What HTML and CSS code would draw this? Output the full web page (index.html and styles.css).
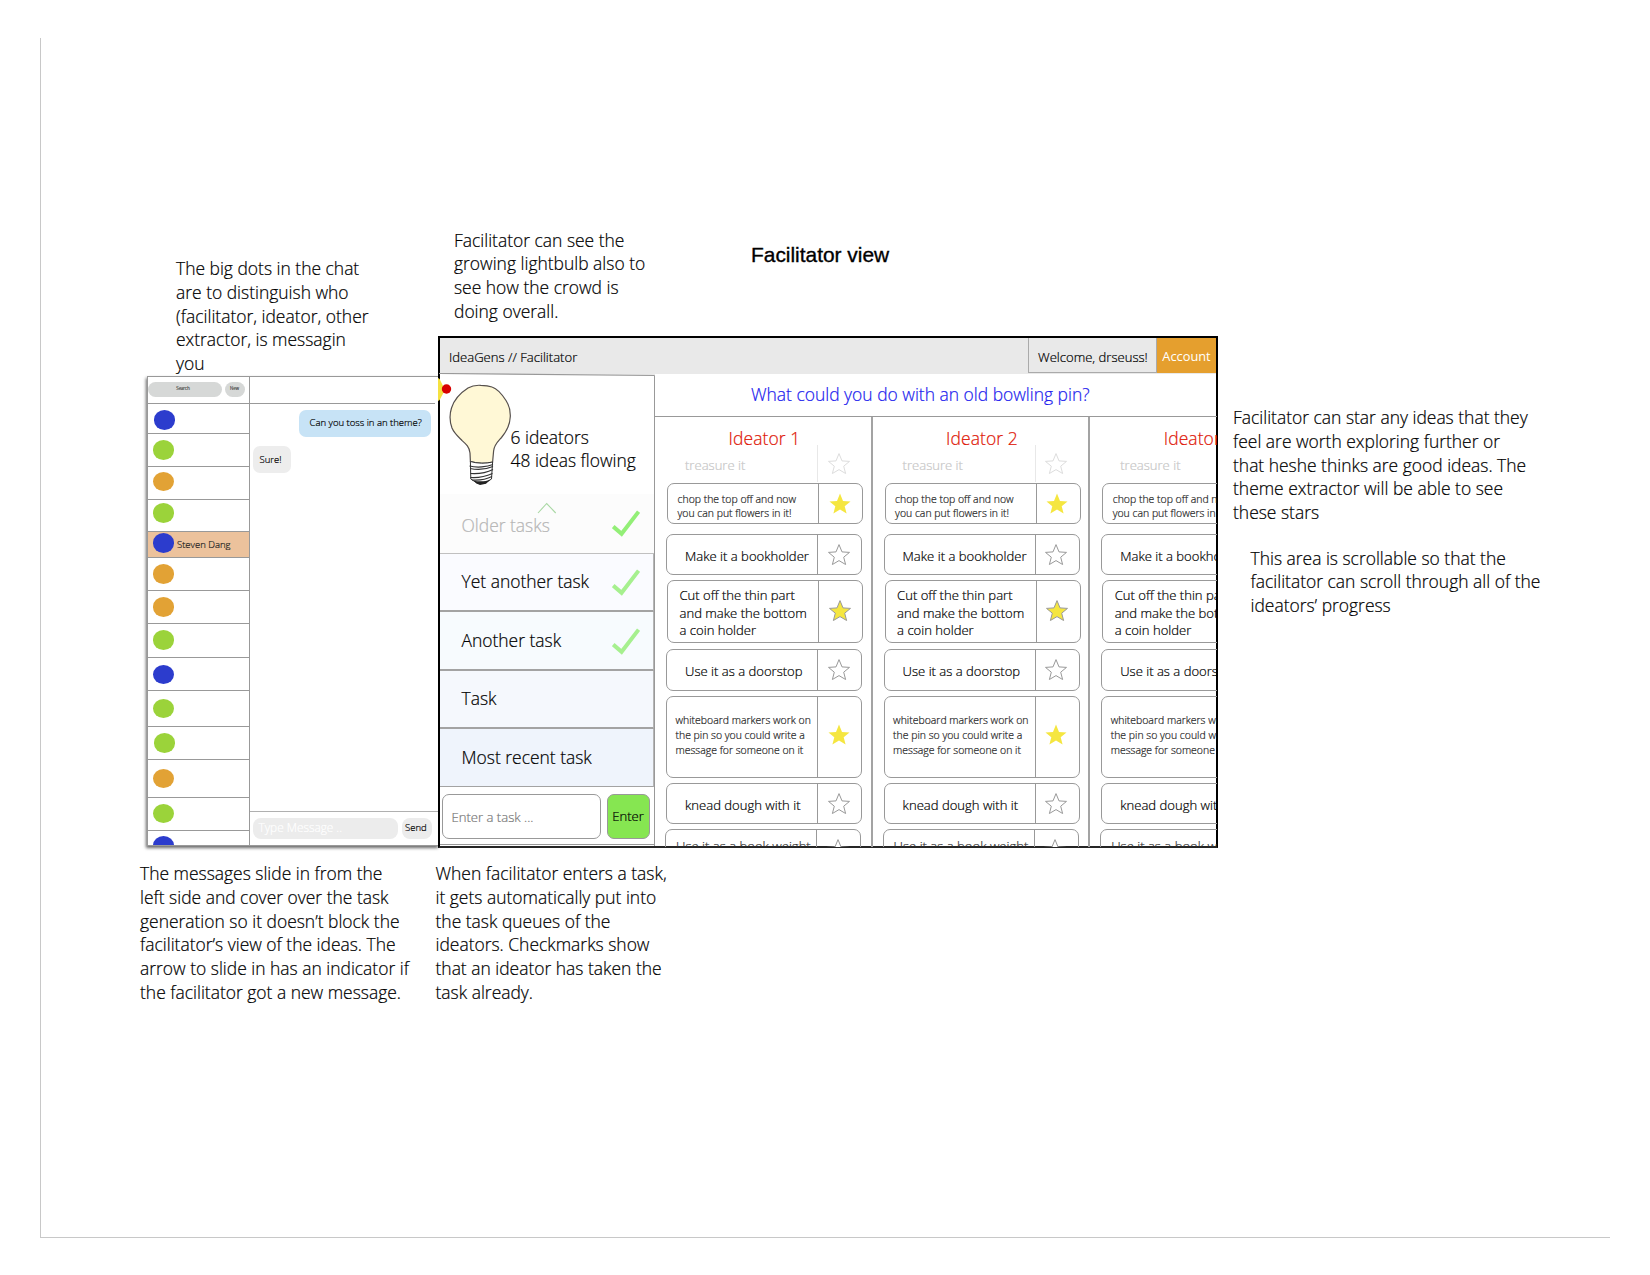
FILE: index.html
```html
<!DOCTYPE html>
<html lang="en">
<head>
<meta charset="utf-8">
<title>IdeaGens – Facilitator view</title>
<link rel="stylesheet" href="styles.css">
</head>
<body>
<svg class="defs" aria-hidden="true">
  <symbol id="star" viewBox="-12 -12 24 24">
    <path d="M0-10.4 3-3.1 10.5-2.6 4.7 2.2 6.6 9.5 0 5.6-6.6 9.5-4.7 2.2-10.5-2.6-3-3.1Z"/>
  </symbol>
  <symbol id="check" viewBox="0 0 28 27">
    <path d="M1.2 16.6 9.6 23.8 26.6 1.6" fill="none" stroke="currentColor" stroke-width="4"/>
  </symbol>
</svg>

<main class="canvas">
  <div class="frame"></div>

  <h1 class="title">Facilitator view</h1>
  <p class="note note-dots">The big dots in the chat<br>are to distinguish who<br>(facilitator, ideator, other<br>extractor, is messagin<br>you</p>
  <p class="note note-bulb">Facilitator can see the<br>growing lightbulb also to<br>see how the crowd is<br>doing overall.</p>
  <p class="note note-messages">The messages slide in from the<br>left side and cover over the task<br>generation so it doesn’t block the<br>facilitator’s view of the ideas. The<br>arrow to slide in has an indicator if<br>the facilitator got a new message.</p>
  <p class="note note-tasks">When facilitator enters a task,<br>it gets automatically put into<br>the task queues of the<br>ideators. Checkmarks show<br>that an ideator has taken the<br>task already.</p>
  <p class="note note-stars">Facilitator can star any ideas that they<br>feel are worth exploring further or<br>that heshe thinks are good ideas. The<br>theme extractor will be able to see<br>these stars</p>
  <p class="note note-scroll">This area is scrollable so that the<br>facilitator can scroll through all of the<br>ideators’ progress</p>

  <section class="chat">
    <aside class="contacts">
      <div class="search-row"><span class="pill search">Search</span><span class="pill new">New</span></div>
      <ul class="contact-list">
        <li><i class="dot blue"></i></li>
        <li><i class="dot green"></i></li>
        <li><i class="dot orange"></i></li>
        <li><i class="dot green"></i></li>
        <li class="selected"><i class="dot blue"></i><span>Steven Dang</span></li>
        <li><i class="dot orange"></i></li>
        <li><i class="dot orange"></i></li>
        <li><i class="dot green"></i></li>
        <li><i class="dot blue"></i></li>
        <li><i class="dot green"></i></li>
        <li><i class="dot green"></i></li>
        <li><i class="dot orange"></i></li>
        <li><i class="dot green"></i></li>
        <li><i class="dot blue"></i></li>
      </ul>
    </aside>
    <div class="thread">
      <div class="thread-head"></div>
      <div class="messages">
        <div class="bubble mine">Can you toss in an theme?</div>
        <div class="bubble theirs">Sure!</div>
      </div>
      <div class="composer"><span class="message-input">Type Message ..</span><span class="send">Send</span></div>
    </div>
  </section>

  <section class="app">
    <header class="bar">
      <span class="brand">IdeaGens // Facilitator</span>
      <span class="welcome">Welcome, drseuss!</span>
      <span class="account">Account</span>
    </header>
    <div class="body">
      <aside class="panel">
        <svg class="slant" width="216" height="4" viewBox="0 0 216 4"><path d="M0 0H216V2.500L0 .5Z" fill="#e9e9e9"/><path d="M0 .5 215.5 2.5" fill="none" stroke="#999" stroke-width="1.2"/></svg>
        <svg class="slide-tab" width="16" height="24" viewBox="0 0 16 24"><path d="M0 0 1.6 1 7 12 1.6 22 0 23Z" fill="#f5e140"/><circle cx="8.5" cy="11" r="4.7" fill="#d80000"/></svg>
        <div class="hero">
          <svg class="bulb" width="64" height="102" viewBox="0 0 64 102">
            <path d="M31.8 1.3C27 1 22 2.200 19 4 12 8.500 5 16 2.500 24 .6 30 .8 38 3 44 5 49 9 52.500 13 56.500 17 60 20.500 63 21 69L21.400 77.500C28 79.500 37 79.800 43.600 78L44.600 67C45 61 48.500 58 52.500 53.500 58 47 61 40 61.300 32.500 61.500 27 60.500 22 57 16.500 53.500 11 49 5 43 3 39.500 1.600 35.500 1.300 31.800 1.300Z" fill="#fff8d6" stroke="#554f4c" stroke-width="1.2"/>
            <path d="M21.400 77.500 21.800 95 28 99 36 99.200 42.500 95 43.600 78C37 79.800 28 79.500 21.400 77.500Z" fill="#fff" stroke="#333" stroke-width="1"/>
            <path d="M20.500 82C28 84 38 83 44 80.500M21 84.500C30 86.500 38 85 44 82.500M21.500 89.500C29 90 38 88.500 44 85.500M21.500 93.500C29 94 38 92 43.500 89.500M23 96C30 96.500 38 95 43 92.500" fill="none" stroke="#333" stroke-width="1.2"/>
            <path d="M24.500 96.500C30 98 37 97.500 41.500 95.500L37 99.800 31 101 27.500 99.500Z" fill="#222"/>
          </svg>
          <div class="stats">6 ideators<br>48 ideas flowing</div>
        </div>
        <ul class="tasks">
          <li class="older"><span>Older tasks</span><svg class="check" width="28" height="27"><use href="#check"/></svg>
            <svg class="caret" width="20" height="12" viewBox="0 0 20 12"><path d="M1 11 9.700 1.500 18.700 11" fill="none" stroke="#a9d8a4" stroke-width="1.100"/></svg></li>
          <li class="done t1"><span>Yet another task</span><svg class="check" width="28" height="27"><use href="#check"/></svg></li>
          <li class="done t2"><span>Another task</span><svg class="check" width="28" height="27"><use href="#check"/></svg></li>
          <li class="t3"><span>Task</span></li>
          <li class="t4"><span>Most recent task</span></li>
        </ul>
        <div class="task-entry"><span class="task-input">Enter a task ...</span><span class="enter">Enter</span></div>
      </aside>

      <div class="board">
        <h2 class="question">What could you do with an old bowling pin?</h2>
        <div class="columns">
          <section class="column">
            <h3>Ideator 1</h3>
            <article class="idea ghost"><p>treasure it</p><div><svg class="star"><use href="#star"/></svg></div></article>
            <article class="idea small chop"><p>chop the top off and now<br>you can put flowers in it!</p><div><svg class="star on"><use href="#star"/></svg></div></article>
            <article class="idea make"><p>Make it a bookholder</p><div><svg class="star"><use href="#star"/></svg></div></article>
            <article class="idea cut"><p>Cut off the thin part<br>and make the bottom<br>a coin holder</p><div><svg class="star on edged"><use href="#star"/></svg></div></article>
            <article class="idea door"><p>Use it as a doorstop</p><div><svg class="star"><use href="#star"/></svg></div></article>
            <article class="idea small white"><p>whiteboard markers work on<br>the pin so you could write a<br>message for someone on it</p><div><svg class="star on"><use href="#star"/></svg></div></article>
            <article class="idea knead"><p>knead dough with it</p><div><svg class="star"><use href="#star"/></svg></div></article>
            <article class="idea book"><p>Use it as a book weight</p><div><svg class="star"><use href="#star"/></svg></div></article>
          </section>
          <section class="column">
            <h3>Ideator 2</h3>
            <article class="idea ghost"><p>treasure it</p><div><svg class="star"><use href="#star"/></svg></div></article>
            <article class="idea small chop"><p>chop the top off and now<br>you can put flowers in it!</p><div><svg class="star on"><use href="#star"/></svg></div></article>
            <article class="idea make"><p>Make it a bookholder</p><div><svg class="star"><use href="#star"/></svg></div></article>
            <article class="idea cut"><p>Cut off the thin part<br>and make the bottom<br>a coin holder</p><div><svg class="star on edged"><use href="#star"/></svg></div></article>
            <article class="idea door"><p>Use it as a doorstop</p><div><svg class="star"><use href="#star"/></svg></div></article>
            <article class="idea small white"><p>whiteboard markers work on<br>the pin so you could write a<br>message for someone on it</p><div><svg class="star on"><use href="#star"/></svg></div></article>
            <article class="idea knead"><p>knead dough with it</p><div><svg class="star"><use href="#star"/></svg></div></article>
            <article class="idea book"><p>Use it as a book weight</p><div><svg class="star"><use href="#star"/></svg></div></article>
          </section>
          <section class="column">
            <h3>Ideator 3</h3>
            <article class="idea ghost"><p>treasure it</p><div><svg class="star"><use href="#star"/></svg></div></article>
            <article class="idea small chop"><p>chop the top off and now<br>you can put flowers in it!</p><div><svg class="star on"><use href="#star"/></svg></div></article>
            <article class="idea make"><p>Make it a bookholder</p><div><svg class="star"><use href="#star"/></svg></div></article>
            <article class="idea cut"><p>Cut off the thin part<br>and make the bottom<br>a coin holder</p><div><svg class="star on edged"><use href="#star"/></svg></div></article>
            <article class="idea door"><p>Use it as a doorstop</p><div><svg class="star"><use href="#star"/></svg></div></article>
            <article class="idea small white"><p>whiteboard markers work on<br>the pin so you could write a<br>message for someone on it</p><div><svg class="star on"><use href="#star"/></svg></div></article>
            <article class="idea knead"><p>knead dough with it</p><div><svg class="star"><use href="#star"/></svg></div></article>
            <article class="idea book"><p>Use it as a book weight</p><div><svg class="star"><use href="#star"/></svg></div></article>
          </section>
        </div>
      </div>
    </div>
  </section>
</main>
</body>
</html>
```

FILE: styles.css
```css
* { box-sizing: border-box; margin: 0; padding: 0; }
html, body { background: #fff; }
body { font-family: "Open Sans", "Noto Sans", sans-serif; font-weight: 300; color: #000; -webkit-text-stroke-width: .2px; }
ul { list-style: none; }
svg { display: block; flex: none; }
.defs { position: absolute; width: 0; height: 0; }

.canvas { position: relative; width: 1650px; height: 1275px; overflow: hidden; white-space: nowrap; }
.frame { position: absolute; left: 40px; top: 38px; width: 1570px; height: 1200px; border-left: 1px solid #c8c8c8; border-bottom: 1px solid #c8c8c8; }

/* annotations pinned on the canvas */
.title { position: absolute; left: 751px; top: 243px; font: 400 20.900px/24px "Liberation Sans", Arial, sans-serif; -webkit-text-stroke: .35px #000; }
.note { position: absolute; font-size: 17.46px; line-height: 23.75px; }
.note-dots { left: 176px; top: 257px; }
.note-bulb { left: 454px; top: 228.500px; }
.note-messages { left: 140px; top: 862px; }
.note-tasks { left: 435.500px; top: 862px; }
.note-stars { left: 1233px; top: 406px; }
.note-scroll { left: 1250.500px; top: 546.500px; }

/* chat drawer */
.chat { position: absolute; left: 147px; top: 376px; width: 292px; height: 470px; display: flex; background: #fff; border: 1px solid #999; border-right: 0; box-shadow: -1px 2px 3px rgba(0,0,0,.6); }
.contacts { width: 102px; height: 468px; overflow: hidden; border-right: 1px solid #999; display: flex; flex-direction: column; }
.search-row { flex: none; display: flex; gap: 3px; height: 27px; padding: 5px 0 0; border-bottom: 1px solid #999; }
.pill { height: 15px; border-radius: 8px; background: #d6d8d7; color: #444; font-size: 4.400px; line-height: 13.500px; text-align: center; }
.search { width: 74px; padding-right: 4px; }
.new { width: 20px; padding-right: 1px; }
.contact-list { flex: none; }
.contact-list li { display: flex; align-items: flex-start; height: 33px; padding: 6px 0 0 5px; border-bottom: 1px solid #999; }
.contact-list li:nth-child(1) { height: 30px; padding-left: 6px; }
.contact-list li:nth-child(3) { padding-top: 4.500px; }
.contact-list li:nth-child(4) { height: 32px; padding-top: 3px; }
.contact-list li:nth-child(5) { height: 26px; padding-top: 1px; }
.contact-list li:nth-child(8) { height: 34px; }
.contact-list li:nth-child(9) { padding-top: 6.500px; }
.contact-list li:nth-child(10) { height: 36px; padding-top: 7.500px; }
.contact-list li:nth-child(11) { padding-left: 6px; }
.contact-list li:nth-child(12) { height: 38px; padding-top: 8.500px; }
.contact-list li:nth-child(13) { padding-top: 5.500px; }
.contact-list li:nth-child(14) { padding-top: 5px; }
.contact-list .selected { background: #ecc29c; gap: 3px; color: #222; font-size: 9.500px; line-height: 23px; }
.dot { flex: none; width: 21.500px; height: 19.500px; margin-left: -.5px; border-radius: 50%; }
.blue { background: #2c3ccd; }
.green { background: #9bd33a; }
.orange { background: #e2a235; }
.thread { flex: 1; display: flex; flex-direction: column; }
.thread-head { height: 27px; margin-right: 4px; border-bottom: 1px solid #999; }
.messages { flex: 1; display: flex; flex-direction: column; padding: 6px 8px 0 3px; gap: 9px; }
.bubble { height: 27px; border-radius: 7px; font-size: 9.520px; line-height: 25.500px; }
.mine { align-self: flex-end; width: 132px; padding-left: 10.500px; background: #c7e3f6; }
.theirs { align-self: flex-start; width: 38px; padding-left: 6.500px; background: #ededed; line-height: 27px; }
.composer { display: flex; gap: 4px; height: 34px; padding: 6px 3px 0; border-top: 1px solid #b0b0b0; }
.message-input { width: 145px; height: 20.500px; padding-left: 5.500px; border-radius: 8px; background: #ececec; color: #fff; font-size: 11.820px; line-height: 18px; }
.send { width: 29.500px; height: 20.500px; padding-left: 3px; border-radius: 8px; background: #ececec; font-size: 9.500px; line-height: 19px; }

/* facilitator window */
.app { position: absolute; left: 438px; top: 336px; width: 780px; height: 512px; display: flex; flex-direction: column; border: 2px solid #000; border-bottom-color: #262626; background: #fff; }
.bar { display: flex; height: 36px; background: #e9e9e9; font-size: 13.070px; line-height: 38px; }
.brand { flex: 1; padding-left: 9px; }
.welcome { width: 129px; height: 35px; padding-left: 9px; border: 1px solid #aaa; border-top: 0; }
.account { width: 59px; height: 35px; background: #e59f2e; color: #fff; text-align: center; font-weight: 400; font-size: 12.800px; line-height: 36.500px; -webkit-text-stroke-width: 0; }
.body { flex: 1; display: flex; min-height: 0; }

.panel { position: relative; width: 215px; border-right: 1px solid #999; display: flex; flex-direction: column; }
.slant { position: absolute; left: -1px; top: -1px; }
.slide-tab { position: absolute; left: -2px; top: 4px; }
.hero { display: flex; height: 120px; padding: 10px 0 0 8.500px; }
.stats { margin-left: -2px; padding-top: 42px; font-size: 17.420px; line-height: 23px; }
.tasks li { position: relative; display: flex; align-items: center; justify-content: space-between; padding: 0 13px 3px 21.500px; font-size: 17.460px; border-bottom: 2px solid #a3a3a3; border-right: 1px solid #b5b5b5; }
.tasks .older { height: 60px; padding: 3px 14px 0 21.500px; background: #fcfcfc; color: #b5b5b5; border-bottom: 1px solid #c0c0c0; border-right: 0; }
.tasks .t1 { height: 58px; background: #fafbff; }
.tasks .t2 { height: 59px; padding-bottom: 2px; background: #f7fbfe; }
.tasks .t3 { height: 58px; background: #f5f8fd; }
.tasks .t4 { height: 58px; padding-bottom: 2px; background: #eff4fc; border-bottom-width: 1px; }
.check { color: #a6f08f; margin-top: 3px; }
.older .check { color: #93ef77; margin-top: -3px; }
.caret { position: absolute; left: 97px; top: 8px; }
.task-entry { display: flex; gap: 6px; flex: 1; margin-bottom: 1px; padding: 7px 0 0 2px; border-bottom: 1px solid #999; }
.task-input { width: 159px; height: 45px; padding-left: 8.500px; border: 1px solid #999; border-radius: 7px; color: #777; font-size: 13.100px; line-height: 45px; }
.enter { width: 43px; height: 45px; border: 1px solid #999; border-radius: 7px; background: #86e651; text-align: center; padding-right: 1px; font-size: 13.070px; line-height: 42px; }

.board { position: relative; flex: 1; min-width: 0; margin-right: -1px; margin-bottom: -1px; overflow: hidden; }
.question { height: 43px; padding-left: 96px; border-bottom: 1px solid #999; color: #2020ee; font-size: 17.460px; font-weight: 300; line-height: 40px; }
.columns { display: flex; height: 430px; }
.column { flex: none; width: 217.600px; border-right: 2px solid #a3a3a3; }
.column h3 { height: 27px; padding-top: 15px; padding-left: 73.500px; color: #de1505; font-size: 17.460px; font-weight: 300; line-height: 12px; letter-spacing: .1px; }
.idea { display: flex; width: 196px; height: 41px; margin-left: 11px; border: 1px solid #999; border-radius: 7px; font-size: 13.070px; line-height: 17.400px; }
.idea p { flex: 1; align-self: center; padding: 4px 0 0 18px; }
.idea div { width: 44px; display: flex; align-items: center; justify-content: center; padding-right: 2px; border-left: 1px solid #999; }
.star { width: 24px; height: 24px; fill: #fff; stroke: #999; stroke-width: 1px; }
.star.on { fill: #f5e640; stroke: none; }
.star.edged { stroke: #999; margin-bottom: 2px; }
.small { font-size: 10.460px; line-height: 14px; color: #1c1c1c; }
.ghost { height: 39px; border-color: transparent; color: #c6c6c6; }
.ghost div { border-color: #e8e8e8; }
.ghost p { padding-top: 4px; }
.ghost .star { stroke: #ddd; margin-top: 1px; }
.chop { margin-left: 12px; }
.chop p { padding: 4px 0 0 9.500px; }
.make { margin-top: 10px; }
.cut { height: 63px; margin: 5px 0 0 12px; }
.cut p { padding: 3.500px 0 0 11.500px; }
.door { height: 42px; margin-top: 6px; }
.door p { padding-top: 3px; }
.white { height: 82px; margin-top: 5px; line-height: 15px; }
.white p { padding: 0 0 4px 8.500px; }
.white .star { margin-bottom: 4px; }
.knead { margin-top: 5px; }
.book { margin: 5px 0 0 10px; color: #333; }
.book p { padding: 0 0 5px 10px; }
```
